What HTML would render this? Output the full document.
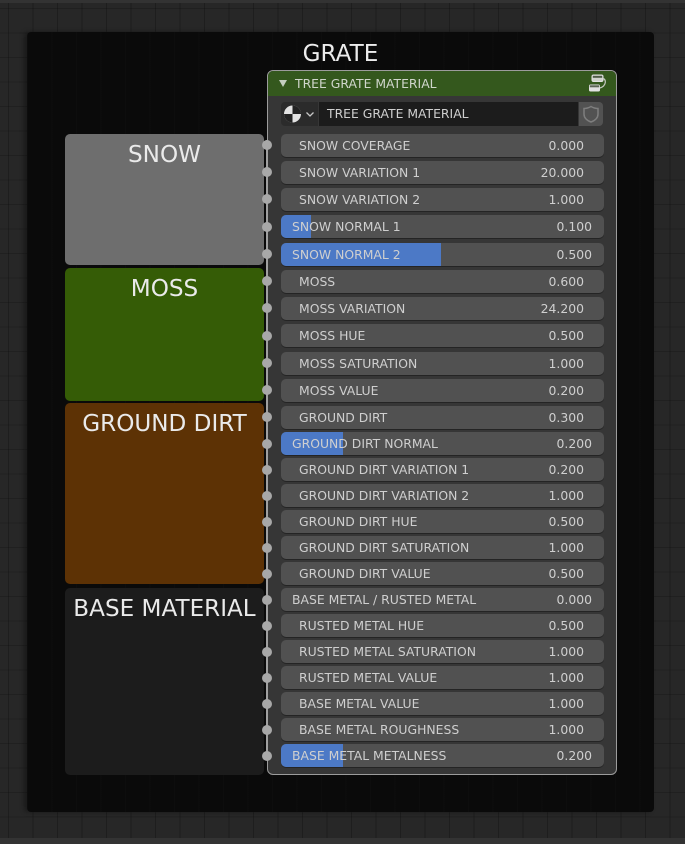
<!DOCTYPE html>
<html><head><meta charset="utf-8"><style>
html,body{margin:0;padding:0;background:#262626}
#p{position:relative;width:685px;height:844px;overflow:hidden;background-color:#272727;font-family:"DejaVu Sans","Liberation Sans",sans-serif;filter:blur(.3px);
background-image:repeating-linear-gradient(90deg,rgba(0,0,0,.22) 0 1px,transparent 1px 24.5px),repeating-linear-gradient(180deg,rgba(0,0,0,.18) 0 1px,transparent 1px 24.5px);background-position:8px 8px}
#p div{position:absolute;box-sizing:border-box}
.strip{left:0;width:685px;background:#333}
#fr{left:27px;top:32px;width:627px;height:780px;border-radius:4px;background-color:#0a0a0a;box-shadow:-3px 0 5px rgba(0,0,0,.35);
background-image:repeating-linear-gradient(90deg,rgba(255,255,255,.012) 0 1px,rgba(0,0,0,0) 1px 24.5px)}
.t{color:#ececec;text-align:center;white-space:nowrap}
.box{left:65px;width:199px;border-radius:5px;font-size:23.1px;line-height:28px;color:#eaeaea;text-align:center;white-space:nowrap}
#node{left:267px;top:70px;width:350px;height:705px;border-radius:6px;background:#363636;border:1.5px solid #9c9c9c;overflow:hidden}
#hd{left:0;top:0;width:100%;height:25px;background:#34581d}
.r{left:281px;width:323px;height:23px;border-radius:5px;background:#515151;box-shadow:0 1px 0 #242424;overflow:hidden;font-size:12.4px;line-height:23px;color:#cfcfcf;white-space:nowrap}
.f{left:0;top:0;height:23px;background:#4c79c6}
.l{left:18px;top:0}.l2{left:11px;top:0}
.v{right:20px;top:0}.sl .v{right:12px}
.d{left:261.5px;width:10.5px;height:10.5px;border-radius:50%;background:#a8a8a8}
</style></head><body><div id="p">
<div class="strip" style="top:0;height:3px"></div>
<div class="strip" style="top:838px;height:6px"></div>
<div id="fr"></div>
<div class="t" style="left:240.5px;top:39px;width:200px;font-size:23.1px;line-height:30px">GRATE</div>

<div class="box" style="top:134px;height:131px;background:#6e6e6e;padding-top:7px">SNOW</div>
<div class="box" style="top:268px;height:133px;background:#355c06;padding-top:7px">MOSS</div>
<div class="box" style="top:403px;height:181px;background:#5d3205;padding-top:7px">GROUND DIRT</div>
<div class="box" style="top:588px;height:187px;background:#1c1c1c;padding-top:7px">BASE MATERIAL</div>

<div id="node">
<div id="hd"></div>
<svg style="position:absolute;left:11px;top:9px" width="9" height="8"><path d="M0 0H8L4 7Z" fill="#c4cfc0"/></svg>
<div style="left:27px;top:0;font-size:12.4px;line-height:25px;color:#d0d6cc;white-space:nowrap">TREE GRATE MATERIAL</div>
<svg style="position:absolute;left:320px;top:3px" width="19" height="19" viewBox="0 0 19 19"><rect x="4" y="1" width="11" height="6.5" rx="1.5" fill="#cfd2cc" stroke="#e2e2e2" stroke-width="1"/><rect x="4.8" y="1.8" width="9.4" height="2" fill="#4d5a45"/><rect x="1" y="10.5" width="11" height="7" rx="1.5" fill="#e2e2e2"/><rect x="1.8" y="11.3" width="9.4" height="2" fill="#5c6656"/><path d="M15 4.5C18.5 5 18.5 12 12 14" fill="none" stroke="#c4c8c0" stroke-width="1.3"/></svg>
</div>

<div style="left:281px;top:102px;width:37px;height:24px;background:#2b2b2b;border-radius:4px 0 0 4px"></div>
<svg style="position:absolute;left:283px;top:105px" width="33" height="18" viewBox="0 0 33 18"><circle cx="9.5" cy="9" r="8.5" fill="#e2e2e2"/><path d="M9.5 .5A8.5 8.5 0 0 1 18 9H9.5Z" fill="#222"/><path d="M9.5 9V17.5A8.5 8.5 0 0 1 1 9Z" fill="#222"/><path d="M23.5 7.5L27 11L30.5 7.5" fill="none" stroke="#c8c8c8" stroke-width="1.3"/></svg>
<div style="left:319px;top:102px;width:259px;height:24px;background:#1c1c1c;color:#cfcfcf;font-size:12.4px;line-height:24px;padding-left:8px;white-space:nowrap">TREE GRATE MATERIAL</div>
<div style="left:579px;top:102px;width:24px;height:24px;background:#525252;border-radius:0 4px 4px 0"></div>
<svg style="position:absolute;left:582px;top:105px" width="18" height="18" viewBox="0 0 18 18"><path d="M9 1.5C11.5 3 13.5 3.5 16 3.5V9C16 13 13 15.5 9 17C5 15.5 2 13 2 9V3.5C4.5 3.5 6.5 3 9 1.5Z" fill="none" stroke="#7e7e7e" stroke-width="1.5"/></svg>

<div style="left:266px;top:140px;width:2px;height:620px;background:#a0a0a0"></div>

<div class="r" style="top:134px"><div class="l">SNOW COVERAGE</div><div class="v">0.000</div></div>
<div class="r" style="top:161px"><div class="l">SNOW VARIATION 1</div><div class="v">20.000</div></div>
<div class="r" style="top:188px"><div class="l">SNOW VARIATION 2</div><div class="v">1.000</div></div>
<div class="r sl" style="top:215px"><div class="f" style="width:30px"></div><div class="l2">SNOW NORMAL 1</div><div class="v">0.100</div></div>
<div class="r sl" style="top:243px"><div class="f" style="width:160px"></div><div class="l2">SNOW NORMAL 2</div><div class="v">0.500</div></div>
<div class="r" style="top:270px"><div class="l">MOSS</div><div class="v">0.600</div></div>
<div class="r" style="top:297px"><div class="l">MOSS VARIATION</div><div class="v">24.200</div></div>
<div class="r" style="top:324px"><div class="l">MOSS HUE</div><div class="v">0.500</div></div>
<div class="r" style="top:352px"><div class="l">MOSS SATURATION</div><div class="v">1.000</div></div>
<div class="r" style="top:379px"><div class="l">MOSS VALUE</div><div class="v">0.200</div></div>
<div class="r" style="top:406px"><div class="l">GROUND DIRT</div><div class="v">0.300</div></div>
<div class="r sl" style="top:432px"><div class="f" style="width:62px"></div><div class="l2">GROUND DIRT NORMAL</div><div class="v">0.200</div></div>
<div class="r" style="top:458px"><div class="l">GROUND DIRT VARIATION 1</div><div class="v">0.200</div></div>
<div class="r" style="top:484px"><div class="l">GROUND DIRT VARIATION 2</div><div class="v">1.000</div></div>
<div class="r" style="top:510px"><div class="l">GROUND DIRT HUE</div><div class="v">0.500</div></div>
<div class="r" style="top:536px"><div class="l">GROUND DIRT SATURATION</div><div class="v">1.000</div></div>
<div class="r" style="top:562px"><div class="l">GROUND DIRT VALUE</div><div class="v">0.500</div></div>
<div class="r sl" style="top:588px"><div class="l2">BASE METAL / RUSTED METAL</div><div class="v">0.000</div></div>
<div class="r" style="top:614px"><div class="l">RUSTED METAL HUE</div><div class="v">0.500</div></div>
<div class="r" style="top:640px"><div class="l">RUSTED METAL SATURATION</div><div class="v">1.000</div></div>
<div class="r" style="top:666px"><div class="l">RUSTED METAL VALUE</div><div class="v">1.000</div></div>
<div class="r" style="top:692px"><div class="l">BASE METAL VALUE</div><div class="v">1.000</div></div>
<div class="r" style="top:718px"><div class="l">BASE METAL ROUGHNESS</div><div class="v">1.000</div></div>
<div class="r sl" style="top:744px"><div class="f" style="width:62px"></div><div class="l2">BASE METAL METALNESS</div><div class="v">0.200</div></div>

<div class="d" style="top:139.5px"></div><div class="d" style="top:166.5px"></div><div class="d" style="top:193.5px"></div><div class="d" style="top:221.5px"></div><div class="d" style="top:248.5px"></div><div class="d" style="top:275.5px"></div><div class="d" style="top:302.5px"></div><div class="d" style="top:330.5px"></div><div class="d" style="top:357.5px"></div><div class="d" style="top:384.5px"></div><div class="d" style="top:411.5px"></div><div class="d" style="top:438.5px"></div><div class="d" style="top:464.5px"></div><div class="d" style="top:490.5px"></div><div class="d" style="top:516.5px"></div><div class="d" style="top:542.5px"></div><div class="d" style="top:568.5px"></div><div class="d" style="top:594.5px"></div><div class="d" style="top:620.5px"></div><div class="d" style="top:646.5px"></div><div class="d" style="top:672.5px"></div><div class="d" style="top:698.5px"></div><div class="d" style="top:724.5px"></div><div class="d" style="top:750.5px"></div>
</div></body></html>
